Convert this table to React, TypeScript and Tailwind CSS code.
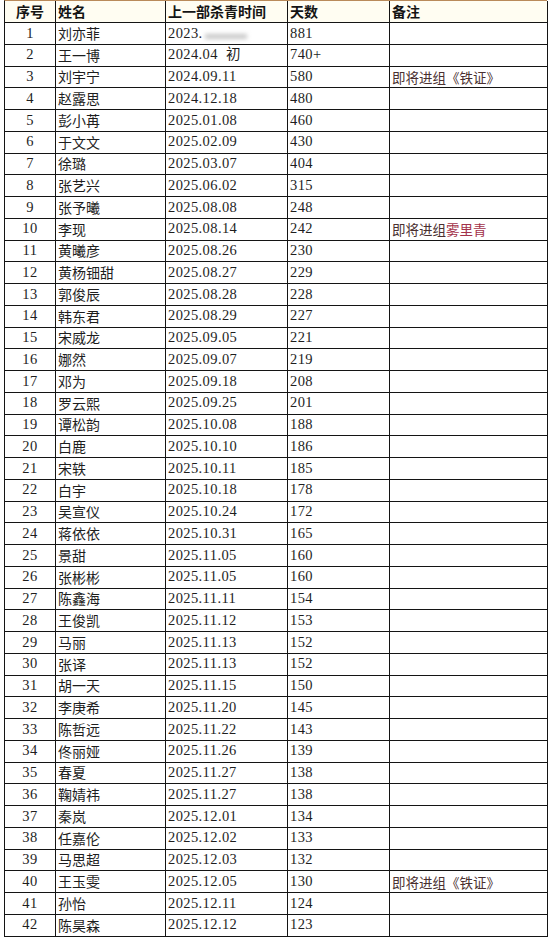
import React from "react";

type Row = [number, string, string, string, string?, string?];

const rows: Row[] = [
  [1, "刘亦菲", "2023.", "881"],
  [2, "王一博", "2024.04  初", "740+"],
  [3, "刘宇宁", "2024.09.11", "580", "即将进组《铁证》"],
  [4, "赵露思", "2024.12.18", "480"],
  [5, "彭小苒", "2025.01.08", "460"],
  [6, "于文文", "2025.02.09", "430"],
  [7, "徐璐", "2025.03.07", "404"],
  [8, "张艺兴", "2025.06.02", "315"],
  [9, "张予曦", "2025.08.08", "248"],
  [10, "李现", "2025.08.14", "242", "即将进组", "雾里青"],
  [11, "黄曦彦", "2025.08.26", "230"],
  [12, "黄杨钿甜", "2025.08.27", "229"],
  [13, "郭俊辰", "2025.08.28", "228"],
  [14, "韩东君", "2025.08.29", "227"],
  [15, "宋威龙", "2025.09.05", "221"],
  [16, "娜然", "2025.09.07", "219"],
  [17, "邓为", "2025.09.18", "208"],
  [18, "罗云熙", "2025.09.25", "201"],
  [19, "谭松韵", "2025.10.08", "188"],
  [20, "白鹿", "2025.10.10", "186"],
  [21, "宋轶", "2025.10.11", "185"],
  [22, "白宇", "2025.10.18", "178"],
  [23, "吴宣仪", "2025.10.24", "172"],
  [24, "蒋依依", "2025.10.31", "165"],
  [25, "景甜", "2025.11.05", "160"],
  [26, "张彬彬", "2025.11.05", "160"],
  [27, "陈鑫海", "2025.11.11", "154"],
  [28, "王俊凯", "2025.11.12", "153"],
  [29, "马丽", "2025.11.13", "152"],
  [30, "张译", "2025.11.13", "152"],
  [31, "胡一天", "2025.11.15", "150"],
  [32, "李庚希", "2025.11.20", "145"],
  [33, "陈哲远", "2025.11.22", "143"],
  [34, "佟丽娅", "2025.11.26", "139"],
  [35, "春夏", "2025.11.27", "138"],
  [36, "鞠婧祎", "2025.11.27", "138"],
  [37, "秦岚", "2025.12.01", "134"],
  [38, "任嘉伦", "2025.12.02", "133"],
  [39, "马思超", "2025.12.03", "132"],
  [40, "王玉雯", "2025.12.05", "130", "即将进组《铁证》"],
  [41, "孙怡", "2025.12.11", "124"],
  [42, "陈昊森", "2025.12.12", "123"],
];

const grid = "grid grid-cols-[51px_110px_122px_102px_158px]";
const cell = "border-r border-b border-[#141414] flex items-center overflow-hidden whitespace-pre";
const num = "font-['Liberation_Serif','Noto_Sans_CJK_SC',serif] text-[14.5px] tracking-[0.4px] text-[#1e1e1e]";
const cjk = "font-['Noto_Sans_CJK_SC',sans-serif] text-[14px] text-[#1e1e1e]";
const head = "font-['Noto_Sans_CJK_SC',sans-serif] text-[14px] font-bold text-[#141414]";

export default function App() {
  return (
    <div className="w-[552px] h-[938px] bg-white pl-[4px]">
      <div className="w-[543px] border-l border-t border-l-[#141414] border-t-[#b98a5a]">
        <div className={`${grid} h-[22px] bg-[#fffdf2]`}>
          <div className={`${cell} justify-center ${head}`}>序号</div>
          <div className={`${cell} pl-[2px] ${head}`}>姓名</div>
          <div className={`${cell} pl-[2px] ${head}`}>上一部杀青时间</div>
          <div className={`${cell} pl-[2px] ${head}`}>天数</div>
          <div className={`${cell} pl-[2px] ${head}`}>备注</div>
        </div>
        {rows.map(([i, name, date, days, note, red]) => (
          <div key={i} className={`${grid} h-[21.76px]`}>
            <div className={`${cell} justify-center ${num}`}>{i}</div>
            <div className={`${cell} pl-[2px] ${cjk}`}>{name}</div>
            <div className={`${cell} pl-[2px] ${num}`}>
              {date}
              {i === 1 && (
                <span className="inline-block ml-[2px] mt-[6px] w-[42px] h-[5px] bg-[#c8c8c8] blur-[2px]" />
              )}
            </div>
            <div className={`${cell} pl-[2px] ${num}`}>{days}</div>
            <div className={`${cell} pl-[2px] font-['Noto_Sans_CJK_SC',sans-serif] text-[13.5px] text-[#4a3030]`}>
              {note}
              {red && <span className="text-[#a3324a]">{red}</span>}
            </div>
          </div>
        ))}
      </div>
    </div>
  );
}
